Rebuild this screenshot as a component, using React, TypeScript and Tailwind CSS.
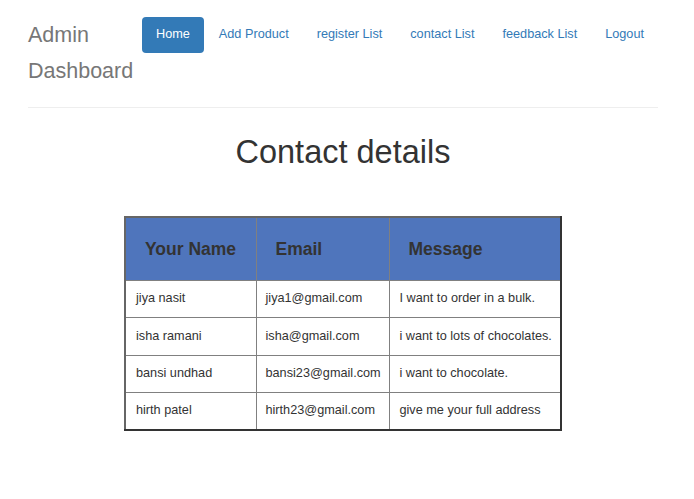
import React from "react";

const links = ["Add Product", "register List", "contact List", "feedback List", "Logout"];

const rows = [
  { name: "jiya nasit", email: "jiya1@gmail.com", message: "I want to order in a bulk." },
  { name: "isha ramani", email: "isha@gmail.com", message: "i want to lots of chocolates." },
  { name: "bansi undhad", email: "bansi23@gmail.com", message: "i want to chocolate." },
  { name: "hirth patel", email: "hirth23@gmail.com", message: "give me your full address" },
];

export default function App() {
  return (
    <div className="min-h-screen bg-white font-['Liberation_Sans',Arial,sans-serif] text-[#333]">
      <div className="ml-[28px] mr-[36px]">
        <div className="flex items-start pt-[17px] pb-[18px]">
          <div className="w-[114px] text-[21.5px] leading-[36px] text-[#777]">Admin Dashboard</div>
          <nav className="flex gap-[2px] whitespace-nowrap text-[12.7px] leading-[18px]">
            <a className="rounded-[4px] bg-[#337ab7] px-[14px] py-[8px] pb-[10px] text-white">Home</a>
            {links.map((l) => (
              <a key={l} className="px-[13px] pt-[8px] pb-[10px] text-[#337ab7]">
                {l}
              </a>
            ))}
          </nav>
        </div>
        <div className="h-px bg-[#eee]" />
        <h1 className="mt-[24px] text-center text-[32.5px] leading-[40px] text-[#333]">Contact details</h1>
        <div className="mt-[44px] flex justify-center">
          <table className="w-[438px] table-fixed border-collapse border-2 border-t-[#666] border-l-[#666] border-b-[#333] border-r-[#333] text-[12.7px] whitespace-nowrap">
            <thead>
              <tr className="bg-[#4f75bc] h-[63px]">
                <th className="w-[131px] border border-[#808080] px-[19px] text-left text-[17.5px] font-bold text-[#333]">Your Name</th>
                <th className="w-[133px] border border-[#808080] px-[19px] text-left text-[17.5px] font-bold text-[#333]">Email</th>
                <th className="border border-[#808080] px-[19px] text-left text-[17.5px] font-bold text-[#333]">Message</th>
              </tr>
            </thead>
            <tbody>
              {rows.map((r) => (
                <tr key={r.email} className="h-[37.5px]">
                  <td className="border border-[#808080] px-[10px]">{r.name}</td>
                  <td className="border border-[#808080] px-[9px]">{r.email}</td>
                  <td className="border border-[#808080] px-[10px]">{r.message}</td>
                </tr>
              ))}
            </tbody>
          </table>
        </div>
      </div>
    </div>
  );
}
